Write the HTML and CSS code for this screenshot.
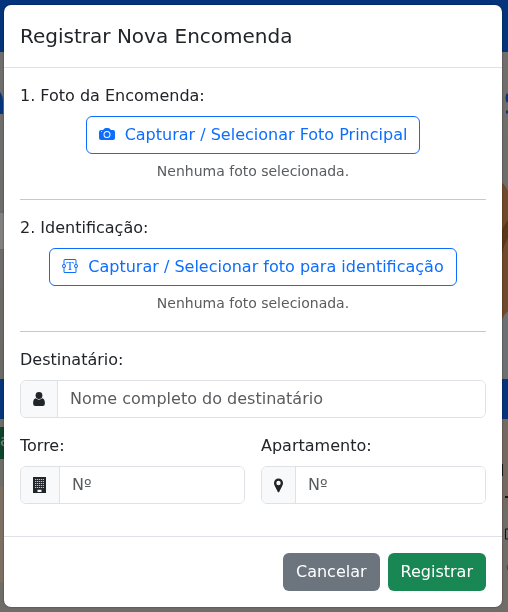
FILE: index.html
```html
<!DOCTYPE html>
<html lang="pt-BR">
<head>
<meta charset="utf-8">
<meta name="viewport" content="width=device-width, initial-scale=1">
<title>Registrar Nova Encomenda</title>
<link rel="stylesheet" href="styles.css">
</head>
<body>
<div class="page" aria-hidden="true">
  <div class="page-header"></div>
  <div class="page-hero">
    <svg class="edge edge-left" width="4" height="327">
      <path d="M0 40q3 4 3 10v12H0z" fill="#06357c"/>
      <path d="M0 160.500h4M0 197.500h4" stroke="#686868"/>
      <path d="M0 161h4v36H0z" fill="#828180"/>
    </svg>
    <svg class="edge edge-right" width="6" height="327">
      <path d="M6 42q-2 3 0 8M4 60h2" stroke="#06357c" stroke-width="3" fill="none"/>
      <path d="M0 131q3 2 6 8v120q-4 4-6 9z" fill="#704a2a"/>
      <path d="M0 178q4-8 6-10v18q-4 6-6 16z" fill="#593719"/>
      <path d="M0 268q2-6 6-8v67H0z" fill="#6d7072"/>
    </svg>
  </div>
  <div class="page-band"></div>
  <div class="page-content">
    <svg class="edge edge-left" width="4" height="193">
      <path d="M0 8h4v32H0z" fill="#0d442b"/>
      <text class="edge-text" x="0" y="27">a</text>
      <path d="M0 67h4v97H0z" fill="#7c7063"/>
    </svg>
    <svg class="edge edge-right" width="6" height="193">
      <path d="M0 0h6v89H0z" fill="#756a61"/>
      <path d="M0 45h1v12H0zM3 77h3v2H3z" fill="#151515"/>
      <path d="M6 110H3.500v10H6" fill="none" stroke="#111"/>
      <path d="M6 146q-2 1 0 5" fill="none" stroke="#444"/>
    </svg>
  </div>
</div>

<main class="modal" role="dialog" aria-modal="true" aria-labelledby="modal-title">
  <form class="modal-form">
    <header class="modal-header">
      <h1 class="modal-title" id="modal-title">Registrar Nova Encomenda</h1>
    </header>
    <div class="modal-body">
      <section class="photo" aria-labelledby="photo-label">
        <p class="label" id="photo-label">1. Foto da Encomenda:</p>
        <button class="btn btn-outline" type="button">
          <svg class="icon" viewBox="0 0 16 16" width="16" height="16" fill="currentColor" aria-hidden="true">
            <path d="M10.500 8.500a2.500 2.500 0 1 1-5 0 2.500 2.500 0 0 1 5 0"/>
            <path d="M2 4a2 2 0 0 0-2 2v6a2 2 0 0 0 2 2h12a2 2 0 0 0 2-2V6a2 2 0 0 0-2-2h-1.172a2 2 0 0 1-1.414-.586l-.828-.828A2 2 0 0 0 9.172 2H6.828a2 2 0 0 0-1.414.586l-.828.828A2 2 0 0 1 3.172 4zm.5 2a.5.5 0 1 1 0-1 .5.5 0 0 1 0 1m9 2.500a3.500 3.500 0 1 1-7 0 3.500 3.500 0 0 1 7 0"/>
          </svg>
          Capturar / Selecionar Foto Principal
        </button>
        <p class="hint">Nenhuma foto selecionada.</p>
      </section>
      <hr class="divider">
      <section class="photo" aria-labelledby="ident-label">
        <p class="label" id="ident-label">2. Identificação:</p>
        <button class="btn btn-outline" type="button">
          <svg class="icon" viewBox="0 0 16 16" width="16" height="16" fill="currentColor" aria-hidden="true">
            <path d="M1.500 2.500A1.500 1.500 0 0 1 3 1h10a1.500 1.500 0 0 1 1.500 1.500v3.563a2 2 0 0 1 0 3.874V13.500A1.500 1.500 0 0 1 13 15H3a1.500 1.500 0 0 1-1.500-1.500V9.937a2 2 0 0 1 0-3.874zm1 3.563a2 2 0 0 1 0 3.874V13.500a.5.5 0 0 0 .5.5h10a.5.5 0 0 0 .5-.5V9.937a2 2 0 0 1 0-3.874V2.500A.5.5 0 0 0 13 2H3a.5.5 0 0 0-.5.5zM2 7a1 1 0 1 0 0 2 1 1 0 0 0 0-2m12 0a1 1 0 1 0 0 2 1 1 0 0 0 0-2"/>
            <path d="M11.434 4H4.566L4.500 5.994h.386c.21-1.252.612-1.446 2.173-1.495l.343-.011v6.343c0 .537-.116.665-1.049.748V12h3.294v-.421c-.938-.083-1.054-.21-1.054-.748V4.488l.348.01c1.560.05 1.963.244 2.173 1.496h.386z"/>
          </svg>
          Capturar / Selecionar foto para identificação
        </button>
        <p class="hint">Nenhuma foto selecionada.</p>
      </section>
      <hr class="divider">
      <div class="field">
        <label class="label" for="recipient">Destinatário:</label>
        <div class="input-group">
          <span class="addon">
            <svg width="12" height="16" viewBox="0 0 12 16" fill="currentColor" aria-hidden="true">
              <circle cx="6" cy="4.500" r="3.400"/>
              <path d="M2.900 7.300Q6 10 9.100 7.300C11 7.500 11.900 9.500 11.900 12.400q0 2.600-2.200 2.600H2.300Q.1 15 .1 12.400C.1 9.500 1 7.500 2.900 7.300z"/>
            </svg>
          </span>
          <input class="input" id="recipient" type="text" placeholder="Nome completo do destinatário">
        </div>
      </div>
      <div class="field-row">
        <div class="field">
          <label class="label" for="tower">Torre:</label>
          <div class="input-group">
            <span class="addon">
              <svg width="14" height="16" viewBox="0 0 14 16" aria-hidden="true">
                <path d="M0 0h13v16H0z" fill="#212529"/>
                <path d="M2 2.500h9M2 4.500h9M2 6.500h9M2 8.500h9M2 10.500h9" stroke="#f8f9fa" stroke-width="1.100" stroke-dasharray="1.200 .75" opacity=".75"/>
                <path d="M4.500 12.800h4V15h-4z" fill="#f8f9fa"/>
              </svg>
            </span>
            <input class="input" id="tower" type="text" placeholder="Nº">
          </div>
        </div>
        <div class="field">
          <label class="label" for="apartment">Apartamento:</label>
          <div class="input-group">
            <span class="addon">
              <svg width="9" height="16" viewBox="0 0 9 16" fill="currentColor" aria-hidden="true">
                <path fill-rule="evenodd" d="M4.500 1.500A4.500 4.500 0 0 0 0 6c0 1.200.3 1.800.7 2.700l3 6q.8 1 1.600 0l3-6C8.700 7.800 9 7.200 9 6a4.500 4.500 0 0 0-4.500-4.500m0 2.300a2.200 2.200 0 1 1 0 4.400 2.200 2.200 0 0 1 0-4.400"/>
              </svg>
            </span>
            <input class="input" id="apartment" type="text" placeholder="Nº">
          </div>
        </div>
      </div>
    </div>
    <footer class="modal-footer">
      <button class="btn btn-secondary" type="button">Cancelar</button>
      <button class="btn btn-success" type="submit">Registrar</button>
    </footer>
  </form>
</main>
</body>
</html>
```

FILE: styles.css
```css
*,
*::before,
*::after {
  box-sizing: border-box;
}

body {
  margin: 0;
  min-height: 100vh;
  font: 16px/24px "DejaVu Sans", sans-serif;
  color: #212529;
  background: #74706b;
}

/* Dimmed page behind the dialog */
.page {
  position: fixed;
  inset: 0;
  z-index: -1;
  display: flex;
  flex-direction: column;
}

.page-header {
  height: 52px;
  background: #04347b;
}

.page-hero,
.page-content {
  display: flex;
  justify-content: space-between;
}

.page-hero {
  height: 327px;
  background: linear-gradient(#706f6d, #6c6a67);
}

.page-band {
  height: 40px;
  background: #06357c;
}

.page-content {
  flex: 1;
  background: #706d69;
}

.edge-text {
  font-size: 16px;
  fill: #7f8a83;
}

.modal {
  margin: 5px 6px 5px 4px;
  background: #fff;
  border-radius: 7px;
  box-shadow: 0 0 2px rgb(0 0 0 / 50%);
}

.modal-header {
  padding: 16px;
  border-bottom: 1px solid #dee2e6;
}

.modal-title {
  margin: 0;
  font-size: 20px;
  line-height: 30px;
  font-weight: 400;
}

.modal-body {
  padding: 16px;
}

.photo {
  display: flex;
  flex-direction: column;
  align-items: center;
  gap: 8px;
}

.photo .label {
  align-self: stretch;
  margin: 0;
}

.label {
  display: block;
  margin-bottom: 8px;
}

.hint {
  margin: 0;
  padding-bottom: 2px;
  font-size: 14px;
  line-height: 19px;
  color: #595c5f;
}

.divider {
  margin: 16px 0;
  border: 0;
  border-top: 1px solid #c7c8c9;
}

.btn {
  display: inline-flex;
  align-items: center;
  justify-content: center;
  gap: 10px;
  padding: 6px 12px;
  border: 1px solid transparent;
  border-radius: 6px;
  font: inherit;
  color: #fff;
  cursor: pointer;
}

.btn-outline {
  color: #0d6efd;
  border-color: #0d6efd;
  background: transparent;
}

.btn-secondary {
  background: #6c757d;
}

.btn-success {
  background: #198754;
}

.icon {
  flex: none;
  margin-bottom: 2px;
}

.field {
  margin-bottom: 16px;
}

.field-row {
  display: grid;
  grid-template-columns: repeat(2, minmax(0, 1fr));
  gap: 16px;
}

.input-group {
  display: flex;
  height: 38px;
  border: 1px solid #dee2e6;
  border-radius: 6px;
  overflow: hidden;
}

.input-group:focus-within {
  border-color: #86b7fe;
}

.addon {
  display: flex;
  align-items: center;
  padding: 0 12px;
  background: #f8f9fa;
}

.input {
  flex: 1;
  min-width: 0;
  padding: 0 12px;
  border: 0;
  border-left: 1px solid #dee2e6;
  outline: 0;
  font: inherit;
  color: inherit;
  background: #fff;
}

.input::placeholder {
  color: #595c5f;
  opacity: 1;
}

.modal-footer {
  display: flex;
  justify-content: flex-end;
  gap: 8px;
  padding: 16px;
  border-top: 1px solid #dee2e6;
}
```
